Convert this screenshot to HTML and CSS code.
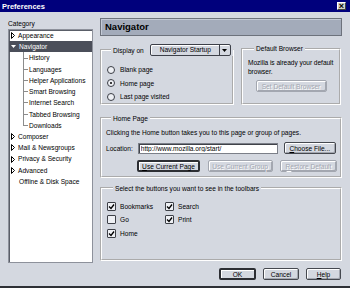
FILE: index.html
```html
<!DOCTYPE html>
<html lang="en">
<head>
    <meta charset="UTF-8">
    <title>Preferences</title>
    <link rel="stylesheet" href="styles.css">
</head>
<body>

<div class="window">
    <!-- Title bar -->
    <div class="titlebar">
        <span class="title">Preferences</span>
        <span class="close">&times;</span>
    </div>

    <div class="main">
        <!-- Category tree -->
        <div class="sidebar">
            <div class="cat-label">Category</div>
            <ul class="tree">
                <li class="row"><svg class="twisty" width="4" height="7" viewBox="0 0 4 7"><path d="M0.5 0.5 L3.5 3.5 L0.5 6.5 Z" fill="none" stroke="#000" stroke-width="1"/></svg>Appearance</li>
                <li class="row selected"><svg class="twisty open" width="5" height="3" viewBox="0 0 5 3"><path d="M0 0 H5 L2.5 3 Z" fill="#fff"/></svg>Navigator</li>
                <li class="row child">History</li>
                <li class="row child">Languages</li>
                <li class="row child">Helper Applications</li>
                <li class="row child">Smart Browsing</li>
                <li class="row child">Internet Search</li>
                <li class="row child">Tabbed Browsing</li>
                <li class="row child last">Downloads</li>
                <li class="row"><svg class="twisty" width="4" height="7" viewBox="0 0 4 7"><path d="M0.5 0.5 L3.5 3.5 L0.5 6.5 Z" fill="none" stroke="#000" stroke-width="1"/></svg>Composer</li>
                <li class="row"><svg class="twisty" width="4" height="7" viewBox="0 0 4 7"><path d="M0.5 0.5 L3.5 3.5 L0.5 6.5 Z" fill="none" stroke="#000" stroke-width="1"/></svg>Mail &amp; Newsgroups</li>
                <li class="row"><svg class="twisty" width="4" height="7" viewBox="0 0 4 7"><path d="M0.5 0.5 L3.5 3.5 L0.5 6.5 Z" fill="none" stroke="#000" stroke-width="1"/></svg>Privacy &amp; Security</li>
                <li class="row"><svg class="twisty" width="4" height="7" viewBox="0 0 4 7"><path d="M0.5 0.5 L3.5 3.5 L0.5 6.5 Z" fill="none" stroke="#000" stroke-width="1"/></svg>Advanced</li>
                <li class="row leaf">Offline &amp; Disk Space</li>
            </ul>
        </div>

        <!-- Navigator panel -->
        <div class="panel">
            <div class="panel-header">Navigator</div>

            <div class="top-row">
                <fieldset class="group display-group">
                    <legend class="combo-legend">
                        <span class="legend-inner">
                            <span>Display on</span>
                            <span class="combo"><span class="combo-text">Navigator Startup</span><span class="combo-btn"><svg width="5" height="3" viewBox="0 0 5 3"><path d="M0 0 H5 L2.5 3 Z" fill="#000"/></svg></span></span>
                        </span>
                    </legend>
                    <div class="radio-row"><span class="radio"></span>Blank page</div>
                    <div class="radio-row"><span class="radio checked"></span>Home page</div>
                    <div class="radio-row"><span class="radio"></span>Last page visited</div>
                </fieldset>

                <fieldset class="group default-group">
                    <legend>Default Browser</legend>
                    <p class="note">Mozilla is already your default<br>browser.</p>
                    <div class="center">
                        <button class="btn set-default" disabled>Set Default Browser</button>
                    </div>
                </fieldset>
            </div>

            <fieldset class="group home-group">
                <legend>Home Page</legend>
                <p class="note">Clicking the Home button takes you to this page or group of pages.</p>
                <div class="location-row">
                    <label class="loc-label">Location:</label>
                    <input class="loc-input" type="text" value="http://www.mozilla.org/start/">
                    <button class="btn choose"><u>C</u>hoose File...</button>
                </div>
                <div class="home-buttons">
                    <button class="btn strong use-page"><u>U</u>se Current Page</button>
                    <button class="btn use-group" disabled>Use Current Group</button>
                    <button class="btn restore" disabled><u>R</u>estore Default</button>
                </div>
            </fieldset>

            <fieldset class="group toolbar-group">
                <legend>Select the buttons you want to see in the toolbars</legend>
                <div class="checks">
                    <div class="check-row"><span class="checkbox checked"></span>Bookmarks</div>
                    <div class="check-row"><span class="checkbox checked"></span>Search</div>
                    <div class="check-row"><span class="checkbox"></span>Go</div>
                    <div class="check-row"><span class="checkbox checked"></span>Print</div>
                    <div class="check-row"><span class="checkbox checked"></span>Home</div>
                </div>
            </fieldset>
        </div>
    </div>

    <!-- Dialog buttons -->
    <div class="footer">
        <button class="btn strong ok">OK</button>
        <button class="btn cancel">Cancel</button>
        <button class="btn help"><u>H</u>elp</button>
    </div>
</div>

</body>
</html>
```

FILE: styles.css
```css
* {
    box-sizing: border-box;
}
body {
    margin: 0;
    font-family: "Liberation Sans", Arial, sans-serif;
    font-size: 6.6px;
    color: #000;
    background: #d4d8e0;
}
.window {
    width: 350px;
    height: 288px;
    background: #d4d8e0;
    border-bottom: 2px solid #2e3036;
    display: flex;
    flex-direction: column;
}

/* title bar */
.titlebar {
    height: 12px;
    flex: none;
    background: #00007c;
    color: #fff;
    display: flex;
    align-items: center;
    justify-content: space-between;
    padding: 0 4px 0 2px;
}
.title {
    font-weight: bold;
    font-size: 7.5px;
}
.close {
    width: 9px;
    height: 8px;
    background: #d4d0c8;
    border: 1px solid;
    border-color: #fff #404040 #404040 #fff;
    color: #000;
    font-size: 9px;
    font-weight: bold;
    line-height: 6px;
    text-align: center;
}

/* main area */
.main {
    height: 252px;
    flex: none;
    display: flex;
    gap: 7px;
    padding: 6px 8px 0 8px;
}
.sidebar {
    width: 85px;
}
.cat-label {
    height: 11px;
    line-height: 11px;
}
.tree {
    list-style: none;
    margin: 0;
    padding: 0;
    height: 234px;
    background: #fff;
    border: 1px solid #8d919b;
    box-shadow: inset 1px 1px 0 #5a5e68;
}
.row {
    height: 11.23px;
    line-height: 11.23px;
    display: flex;
    align-items: center;
    padding-left: 2px;
    white-space: nowrap;
}
.twisty {
    flex: none;
    margin-right: 3px;
}
.row.selected {
    background: #4b4f5a;
    color: #fff;
}
.row.child {
    padding-left: 20px;
    background:
        linear-gradient(#8c8c8c, #8c8c8c) 14px 0 / 1px 100% no-repeat,
        linear-gradient(#8c8c8c, #8c8c8c) 14px 50% / 5px 1px no-repeat;
}
.row.child.last {
    background:
        linear-gradient(#8c8c8c, #8c8c8c) 14px 0 / 1px 50% no-repeat,
        linear-gradient(#8c8c8c, #8c8c8c) 14px 50% / 5px 1px no-repeat;
}
.row.leaf {
    padding-left: 10px;
}

/* panel */
.panel {
    width: 242px;
    display: flex;
    flex-direction: column;
}
.panel-header {
    height: 18px;
    flex: none;
    background: #a3abba;
    border: 1px solid #6d727c;
    box-shadow: inset 1px 1px 0 #c4cad6;
    padding-left: 4px;
    font-size: 9.5px;
    font-weight: bold;
    line-height: 16px;
}

.group {
    margin: 0;
    padding: 0;
    min-width: 0;
    border: 2px groove #fff;
}
.group legend {
    padding: 0 2px;
    line-height: 9px;
    white-space: nowrap;
}
.note {
    margin: 0;
    line-height: 9px;
    white-space: nowrap;
}

.top-row {
    margin-top: 8px;
    height: 61px;
    flex: none;
    display: flex;
    gap: 7px;
}
.display-group {
    width: 134px;
    padding: 7px 0 0 5px;
}
.combo-legend {
    margin-left: 4px;
}
.legend-inner {
    display: flex;
    align-items: center;
    height: 12px;
    white-space: nowrap;
}
.combo {
    margin-left: 6px;
    width: 81px;
    height: 12px;
    display: flex;
    border: 1px solid #3d4049;
    border-radius: 2px;
    background: #d4d8e0;
    box-shadow: inset 1px 1px 0 #fff;
}
.combo-text {
    flex: 1;
    text-align: center;
    line-height: 10px;
    padding-left: 1px;
}
.combo-btn {
    width: 11px;
    border-left: 1px solid #3d4049;
    display: flex;
    align-items: center;
    justify-content: center;
}
.radio-row {
    height: 13.5px;
    display: flex;
    align-items: center;
}
.radio {
    width: 8px;
    height: 8px;
    border: 1px solid #3a3d45;
    border-radius: 50%;
    background: #eef0f4;
    margin-right: 5px;
    display: flex;
    align-items: center;
    justify-content: center;
}
.radio.checked::after {
    content: "";
    width: 2px;
    height: 2px;
    border-radius: 50%;
    background: #000;
}

.default-group {
    width: 100px;
    padding: 4.5px 3px 0 5px;
}
.default-group legend {
    margin-left: 6px;
}
.default-group .note {
    letter-spacing: -0.05px;
}
.center {
    display: flex;
    justify-content: center;
    margin-top: 4.5px;
}

/* buttons */
.btn {
    height: 12px;
    padding: 0;
    font-family: inherit;
    font-size: 6.6px;
    color: #000;
    background: #d4d8e0;
    border: 1px solid #45484f;
    border-radius: 2px;
    box-shadow: inset 1px 1px 0 #fff, inset -1px -1px 0 #a3a7b0;
    white-space: nowrap;
}
.btn.strong {
    border: 2px solid #2c2e33;
    box-shadow: inset 1px 1px 0 #fff;
}
.btn:disabled {
    color: #a3a7b0;
    text-shadow: 1px 1px 0 #fff;
    border-color: #a3a7b0;
}
.set-default {
    width: 71px;
    margin-left: -2px;
}

.home-group {
    margin-top: 8.5px;
    height: 64.5px;
    flex: none;
    padding: 5px 0 0 4px;
}
.home-group legend {
    margin-left: 5px;
}
.location-row {
    display: flex;
    align-items: center;
    margin-top: 5.5px;
    height: 12px;
}
.loc-input {
    margin-left: 5px;
    width: 140px;
    height: 11px;
    padding: 0 2px;
    font-family: inherit;
    font-size: 6.6px;
    background: #fff;
    border: 1px solid #7b7f88;
    box-shadow: inset 1px 1px 0 #3f4249;
}
.choose {
    margin-left: 6px;
    width: 52px;
}
.home-buttons {
    display: flex;
    justify-content: flex-end;
    gap: 7.5px;
    margin-top: 6px;
    padding-right: 3px;
}
.use-page {
    width: 63px;
}
.use-group {
    width: 65px;
}
.restore {
    width: 57px;
}

.toolbar-group {
    margin-top: 5.5px;
    height: 77.5px;
    flex: none;
    padding: 6.75px 0 0 5px;
}
.toolbar-group legend {
    margin-left: 6px;
}
.checks {
    display: grid;
    grid-template-columns: 58px auto;
    grid-auto-rows: 13.5px;
}
.check-row {
    display: flex;
    align-items: center;
}
.checkbox {
    width: 9px;
    height: 9px;
    border: 1px solid #3d4047;
    border-radius: 1px;
    background: #eef0f4;
    margin-right: 4px;
}
.checkbox.checked {
    background:
        url("data:image/svg+xml;utf8,<svg xmlns='http://www.w3.org/2000/svg' width='7' height='7' viewBox='0 0 7 7'><path d='M1 3.5 L3 5.5 L6 1.5' fill='none' stroke='%23000' stroke-width='1.3'/></svg>") center / 7px 7px no-repeat,
        #eef0f4;
}

/* footer */
.footer {
    flex: 1;
    display: flex;
    justify-content: flex-end;
    gap: 7px;
    padding: 4px 9px 0 0;
}
.ok {
    width: 37px;
}
.cancel {
    width: 36px;
}
.help {
    width: 35px;
}
```
